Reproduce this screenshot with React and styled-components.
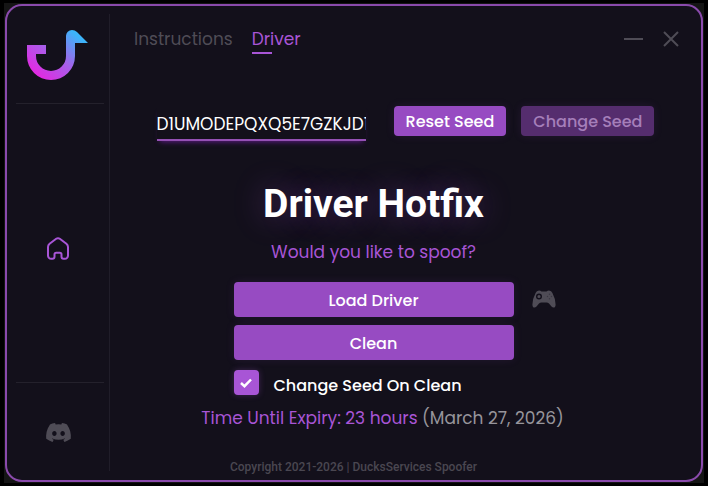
import { useState } from "react";
import styled, { createGlobalStyle } from "styled-components";
import { FaDiscord } from "react-icons/fa";

const GlobalStyle = createGlobalStyle`
  * {
    box-sizing: border-box;
  }
  body {
    margin: 0;
    background-color: #000000;
    color: #ffffff;
    font-family: Poppins, Inter, sans-serif;
    font-size: 17px;
    line-height: 24px;
  }
  button, input {
    font: inherit;
    color: inherit;
  }
`;

const Page = styled.div`
  min-height: 100vh;
  padding: 3px 4px;
  display: flex;
`;

const Backdrop = styled.div`
  flex: 1;
  display: flex;
  padding: 1px;
  background-color: #151515;
`;

const Window = styled.div`
  flex: 1;
  display: flex;
  border: 2px solid #8a4aac;
  border-radius: 17px;
  background-color: #13101b;
`;

const Sidebar = styled.aside`
  width: 103px;
  margin: 8px 0 9px;
  display: flex;
  flex-direction: column;
  border-right: 1px solid #201d29;
`;

const SidebarSection = styled.div`
  display: flex;
  justify-content: center;
  align-items: center;
  height: ${(props) => props.height};
  flex: ${(props) => (props.height ? "none" : "1")};
  margin: 0 5px 0 9px;
  padding: 10px 4px 0 0;
  & + & {
    border-top: 1px solid #24212c;
  }
`;

const LogoSection = styled.div`
  display: flex;
  justify-content: center;
  align-items: center;
  height: 90px;
  margin: 0 5px 0 9px;
  padding: 0 4px 6px 0;
  border-bottom: 1px solid #24212c;
`;

const IconButton = styled.button`
  display: flex;
  padding: 0;
  border: 0;
  background: none;
  color: ${(props) => (props.$active ? "#a855d6" : "#4f4c56")};
  cursor: pointer;
`;

const Main = styled.main`
  flex: 1;
  display: flex;
  flex-direction: column;
`;

const TopBar = styled.header`
  display: flex;
  justify-content: space-between;
  align-items: center;
  padding: 21px 22px 0 24px;
`;

const Tabs = styled.nav`
  display: flex;
  gap: 19px;
`;

const Tab = styled.a`
  color: ${(props) => (props.$active ? "#a855d6" : "#4f4c56")};
  line-height: 25px;
  text-decoration: none;
  &::after {
    content: "";
    display: block;
    width: 20px;
    height: 2px;
    margin-bottom: -2px;
    background-color: ${(props) => (props.$active ? "#a855d6" : "transparent")};
  }
`;

const WindowControls = styled.div`
  display: flex;
  align-items: center;
  gap: 20px;
  padding-bottom: 2px;
`;

const SeedRow = styled.form`
  display: flex;
  justify-content: center;
  align-items: flex-start;
  gap: 15px;
  padding-top: 54px;
`;

const SeedInput = styled.input`
  width: 209px;
  height: 35px;
  margin-right: 13px;
  padding: 2px 0 0;
  border: 0;
  border-bottom: 2px solid #9450b4;
  background: none;
  outline: none;
  box-shadow: 0 4px 5px -3px #5a1a80;
`;

const Button = styled.button`
  height: ${(props) => (props.$wide ? "35px" : "30px")};
  width: ${(props) => (props.$wide ? "100%" : "auto")};
  padding: 2px 12px 0;
  border: 0;
  border-radius: 4px;
  background-color: #974bc2;
  font-size: 16px;
  font-weight: 500;
  box-shadow: 0 0 10px rgba(151, 75, 194, 0.12);
  cursor: pointer;
  &:disabled {
    background-color: #552d6e;
    color: #a57fba;
    cursor: default;
  }
`;

const Panel = styled.section`
  display: flex;
  flex-direction: column;
  align-items: center;
  padding: 37px 64px 0 0;
`;

const Title = styled.h1`
  margin: 0;
  font-family: Roboto, sans-serif;
  font-size: 39px;
  font-weight: 700;
  line-height: 52px;
  text-shadow: 0 0 30px rgba(168, 85, 214, 0.4);
`;

const Question = styled.p`
  margin: 10px 0 18px;
  color: #a855d6;
`;

const Actions = styled.div`
  display: grid;
  grid-template-columns: 1fr 280px 1fr;
  gap: 8px 18px;
  width: 100%;
`;

const ActionCell = styled.div`
  grid-column: 2;
`;

const GameCell = styled.div`
  display: flex;
  align-items: center;
  padding-bottom: 2px;
  color: #4f4c56;
`;

const CheckLabel = styled.label`
  grid-column: 2;
  display: flex;
  align-items: flex-start;
  gap: 15px;
  margin-top: 2px;
  font-size: 16px;
  font-weight: 500;
`;

const CheckText = styled.span`
  padding-top: 4px;
`;

const CheckBox = styled.span`
  display: grid;
  place-items: center;
  > * {
    grid-area: 1 / 1;
  }
  svg {
    pointer-events: none;
  }
`;

const CheckInput = styled.input`
  appearance: none;
  width: 25px;
  height: 25px;
  margin: 0;
  border-radius: 4px;
  background-color: #a855d6;
  box-shadow: 0 0 6px rgba(168, 85, 214, 0.3);
`;

const Expiry = styled.p`
  margin: 8px 0 0 18px;
  color: #a855d6;
  white-space: nowrap;
`;

const ExpiryDate = styled.span`
  color: #97959b;
`;

const Footer = styled.footer`
  margin-top: auto;
  padding: 0 104px 5px 0;
  color: #4a4751;
  font-family: Roboto, sans-serif;
  font-size: 12px;
  font-weight: 500;
  line-height: 16px;
  text-align: center;
`;

function DuckLogo() {
  return (
    <svg width="62" height="51" viewBox="0 0 62 51" role="img" aria-label="Ducks">
      <defs>
        <linearGradient id="duck" gradientUnits="userSpaceOnUse" x1="12" y1="46" x2="48" y2="4">
          <stop offset="0" stopColor="#e02be2" />
          <stop offset="0.5" stopColor="#a462ea" />
          <stop offset="1" stopColor="#3cb4fa" />
        </linearGradient>
      </defs>
      <path
        fill="url(#duck)"
        d="M0 15H19V24H9V26A15 15 0 0 0 39 26V6A6 6 0 0 1 45 0Q48 0 50 2L61 13H48V26A24 24 0 0 1 0 26Z"
      />
    </svg>
  );
}

function HomeIcon() {
  return (
    <svg width="22" height="23" viewBox="0 0 22 23" fill="none" stroke="currentColor" strokeWidth="2">
      <path d="M11 1.2Q12 1.2 12.8 1.8L19.4 6.7Q21 8 21 10V18.5A3.2 3.2 0 0 1 17.8 21.8H16.5Q14.5 21.8 14.5 19.8V17.5Q14.5 15.8 12.8 15.8H9.2Q7.5 15.8 7.5 17.5V19.8Q7.5 21.8 5.5 21.8H4.2A3.2 3.2 0 0 1 1 18.5V10Q1 8 2.6 6.7L9.2 1.8Q10 1.2 11 1.2Z" />
    </svg>
  );
}

function GamepadIcon() {
  return (
    <svg width="24" height="18" viewBox="0 0 24 18" fill="currentColor">
      <path d="M3.600 3Q4.500 0.500 7 0.500Q8.500 0.500 9.500 1.500H14.500Q15.500 0.500 17 0.500Q19.500 0.500 20.400 3Q23.600 9 23.600 14.500Q23.600 17.600 21.600 17.600Q20.500 17.600 19.500 16.500L17 13.600Q16 12.600 14.500 12.600H9.500Q8 12.600 7 13.600L4.500 16.500Q3.500 17.600 2.400 17.600Q0.400 17.600 0.400 14.500Q0.400 9 3.600 3Z" />
      <circle cx="7" cy="6.500" r="2.300" fill="none" stroke="#13101b" strokeWidth="1.400" />
      <g fill="#3a3742">
        <circle cx="17.500" cy="4.300" r="0.700" />
        <circle cx="15.500" cy="6.500" r="0.700" />
        <circle cx="19.500" cy="6.500" r="0.700" />
        <circle cx="17.500" cy="8.700" r="0.700" />
      </g>
    </svg>
  );
}

export default function App() {
  const [seed, setSeed] = useState("D1UMODEPQXQ5E7GZKJD1");
  const [changeOnClean, setChangeOnClean] = useState(true);

  return (
    <Page>
      <GlobalStyle />
      <Backdrop>
        <Window>
          <Sidebar>
            <LogoSection>
              <DuckLogo />
            </LogoSection>
            <SidebarSection>
              <IconButton $active aria-label="Home">
                <HomeIcon />
              </IconButton>
            </SidebarSection>
            <SidebarSection height="89px">
              <IconButton aria-label="Discord">
                <FaDiscord size={27} />
              </IconButton>
            </SidebarSection>
          </Sidebar>

          <Main>
            <TopBar>
              <Tabs>
                <Tab href="#instructions">Instructions</Tab>
                <Tab href="#driver" $active>
                  Driver
                </Tab>
              </Tabs>
              <WindowControls>
                <IconButton aria-label="Minimize">
                  <svg width="19" height="16" stroke="currentColor" strokeWidth="2">
                    <path d="M0 8H19" />
                  </svg>
                </IconButton>
                <IconButton aria-label="Close">
                  <svg width="16" height="16" stroke="currentColor" strokeWidth="2">
                    <path d="M1 1L15 15M15 1L1 15" />
                  </svg>
                </IconButton>
              </WindowControls>
            </TopBar>

            <SeedRow onSubmit={(e) => e.preventDefault()}>
              <SeedInput aria-label="Seed" value={seed} onChange={(e) => setSeed(e.target.value)} />
              <Button type="button">Reset Seed</Button>
              <Button type="submit" disabled>
                Change Seed
              </Button>
            </SeedRow>

            <Panel>
              <Title>Driver Hotfix</Title>
              <Question>Would you like to spoof?</Question>
              <Actions>
                <ActionCell>
                  <Button $wide>Load Driver</Button>
                </ActionCell>
                <GameCell>
                  <GamepadIcon />
                </GameCell>
                <ActionCell>
                  <Button $wide>Clean</Button>
                </ActionCell>
                <CheckLabel>
                  <CheckBox>
                    <CheckInput
                      type="checkbox"
                      checked={changeOnClean}
                      onChange={(e) => setChangeOnClean(e.target.checked)}
                    />
                    {changeOnClean && (
                      <svg width="12" height="10" fill="none" stroke="#ffffff" strokeWidth="2.5">
                        <path d="M1 5L4.500 8.200L11 1.500" />
                      </svg>
                    )}
                  </CheckBox>
                  <CheckText>Change Seed On Clean</CheckText>
                </CheckLabel>
              </Actions>
              <Expiry>
                Time Until Expiry: 23 hours <ExpiryDate>(March 27, 2026)</ExpiryDate>
              </Expiry>
            </Panel>

            <Footer>Copyright 2021-2026 | DucksServices Spoofer</Footer>
          </Main>
        </Window>
      </Backdrop>
    </Page>
  );
}
